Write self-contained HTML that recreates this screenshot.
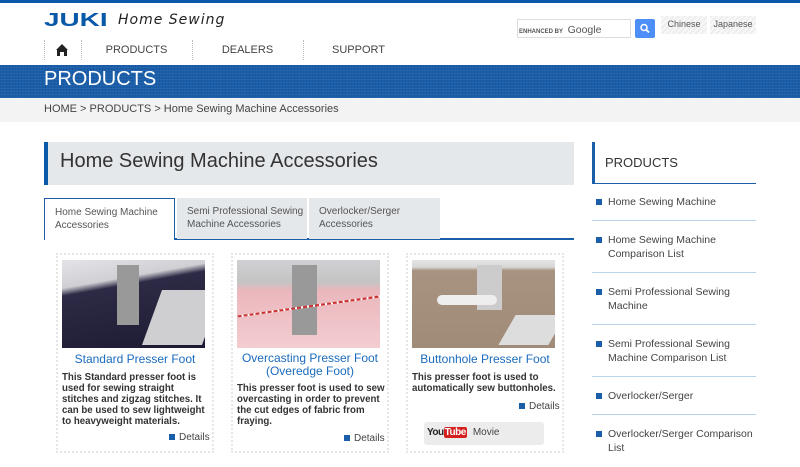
<!DOCTYPE html>
<html><head><meta charset="utf-8"><style>
*{margin:0;padding:0;box-sizing:border-box}
body{width:800px;height:450px;overflow:hidden;background:#fff;font-family:"Liberation Sans",sans-serif;position:relative;color:#333}
.a{position:absolute}
.topbar{left:0;top:0;width:800px;height:3px;background:#0a58a8}
.logo{left:44px;top:10px;font:900 18px/18px "Liberation Sans";color:#0a58a8;transform:scale(1.55,1.05);transform-origin:left top;}
.hs{left:118px;top:12px;font:italic 14px "DejaVu Sans",sans-serif;color:#222;letter-spacing:1px}
.nav{top:40px;height:20px;font-size:11px;color:#444;text-align:center;line-height:20px}
.sep{top:40px;width:1px;height:20px;border-left:1px dotted #bbb}
.banner{left:0;top:65px;width:800px;height:33px;background:#1a5eaa;background-image:repeating-linear-gradient(0deg,rgba(255,255,255,.05) 0 1px,transparent 1px 3px),repeating-linear-gradient(90deg,rgba(0,0,0,.06) 0 1px,transparent 1px 3px)}
.banner span{position:absolute;left:44px;top:3px;color:#fff;font-size:20px}
.crumb{left:0;top:98px;width:800px;height:24px;background:#f3f3f3;font-size:11px;color:#444;padding:5px 44px}
.title{left:44px;top:142px;width:530px;height:43px;background:#e4e8eb;border-left:4px solid #0a58a8;font-size:20px;color:#333;padding:8px 12px}
.tab{top:198px;height:41px;background:#e4e8eb;font-size:10px;line-height:13px;color:#555;padding:7px 10px;white-space:nowrap}
.card{top:253px;width:158px;height:200px;border:2px dotted #e6e6e6}
.img{top:260px;width:143px;height:88px;overflow:hidden}
.ct{font-size:12px;color:#1a6bbd;text-align:center;width:158px}
.cd{font-size:9.7px;font-weight:bold;color:#333;line-height:11px;white-space:nowrap}
.det{font-size:10px;color:#444}
.det:before{content:"";display:inline-block;width:6px;height:6px;background:#1a5eaa;margin-right:4px}
.side{left:592px;width:164px;font-size:10.5px;color:#444;line-height:14px;padding-left:16px;border-bottom:1px solid #b8d3ea}
.side:before{content:"";position:absolute;left:4px;top:4px;width:6px;height:6px;background:#1a5eaa}
</style></head><body>
<div class="a topbar"></div>
<div class="a logo">JUKI</div>
<div class="a hs">Home Sewing</div>
<div class="a sep" style="left:44px"></div>
<svg class="a" style="left:55px;top:43px" width="14" height="14" viewBox="0 0 14 14"><path d="M7 1 L13 7 L12 7 L12 13 L9 13 L9 9 L5 9 L5 13 L2 13 L2 7 L1 7Z" fill="#222"/></svg>
<div class="a sep" style="left:81px"></div>
<div class="a nav" style="left:81px;width:111px">PRODUCTS</div>
<div class="a sep" style="left:192px"></div>
<div class="a nav" style="left:192px;width:111px">DEALERS</div>
<div class="a sep" style="left:303px"></div>
<div class="a nav" style="left:303px;width:111px">SUPPORT</div>
<div class="a" style="left:517px;top:19px;width:114px;height:19px;border:1px solid #ddd;font-size:6px;font-weight:bold;color:#555;padding:4px 1px">ENHANCED BY <span style="font-size:10.5px;font-weight:normal;color:#555;margin-left:3px">Google</span></div>
<div class="a" style="left:635px;top:19px;width:20px;height:19px;background:#4d8ef7;border-radius:2px"><svg width="20" height="19"><circle cx="9" cy="8.5" r="3" stroke="#fff" stroke-width="1.5" fill="none"/><path d="M11 10.5l3 3" stroke="#fff" stroke-width="1.8"/></svg></div>
<div class="a" style="left:661px;top:16px;width:46px;height:18px;background:repeating-linear-gradient(135deg,#eee 0 2px,#f8f8f8 2px 4px);font-size:9px;color:#555;text-align:center;line-height:16px">Chinese</div>
<div class="a" style="left:710px;top:16px;width:46px;height:18px;background:repeating-linear-gradient(135deg,#eee 0 2px,#f8f8f8 2px 4px);font-size:9px;color:#555;text-align:center;line-height:16px">Japanese</div>
<div class="a banner"><span>PRODUCTS</span></div>
<div class="a crumb">HOME &gt; PRODUCTS &gt; Home Sewing Machine Accessories</div>
<div class="a title">Home Sewing Machine Accessories</div>
<div class="a" style="left:44px;top:238px;width:530px;height:2px;background:#1a5eaa"></div>
<div class="a tab" style="left:44px;width:131px;background:#fff;border:1px solid #1a5eaa;border-bottom:none;height:42px">Home Sewing Machine<br>Accessories</div>
<div class="a tab" style="left:177px;width:130px">Semi Professional Sewing<br>Machine Accessories</div>
<div class="a tab" style="left:309px;width:131px">Overlocker/Serger<br>Accessories</div>

<div class="a card" style="left:56px"></div>
<div class="a img" style="left:62px;background:linear-gradient(170deg,#e4e4e8 0,#d0d0d4 25%,#2d2a45 32%,#1d1a33 100%)"><div class="a" style="left:90px;top:30px;width:60px;height:55px;background:#cfcfd2;transform:skewX(-20deg)"></div><div class="a" style="left:55px;top:5px;width:22px;height:60px;background:#999"></div></div>
<div class="a ct" style="left:56px;top:352px">Standard Presser Foot</div>
<div class="a cd" style="left:62px;top:372px">This Standard presser foot is<br>used for sewing straight<br>stitches and zigzag stitches. It<br>can be used to sew lightweight<br>to heavyweight materials.</div>
<div class="a det" style="left:169px;top:432px">Details</div>

<div class="a card" style="left:231px"></div>
<div class="a img" style="left:237px;background:linear-gradient(180deg,#d0d0d4 0,#c4c4c4 25%,#eab7bd 35%,#f3cdd0 100%)"><div class="a" style="left:55px;top:5px;width:25px;height:70px;background:#999"></div><div class="a" style="left:0;top:45px;width:150px;height:2px;background:repeating-linear-gradient(90deg,#c33 0 4px,#fff 4px 6px);transform:rotate(-8deg)"></div></div>
<div class="a ct" style="left:231px;top:352px;line-height:13px">Overcasting Presser Foot (Overedge Foot)</div>
<div class="a cd" style="left:237px;top:383px">This presser foot is used to sew<br>overcasting in order to prevent<br>the cut edges of fabric from<br>fraying.</div>
<div class="a det" style="left:344px;top:433px">Details</div>

<div class="a card" style="left:406px"></div>
<div class="a img" style="left:412px;background:linear-gradient(180deg,#e4e4e4 0,#d8d8d8 8%,#a79380 12%,#9f8b77 100%)"><div class="a" style="left:65px;top:5px;width:25px;height:45px;background:#ccc"></div><div class="a" style="left:25px;top:35px;width:60px;height:10px;background:#eee;border-radius:5px"></div><div class="a" style="left:95px;top:55px;width:50px;height:30px;background:#ddd;transform:skewX(-30deg)"></div></div>
<div class="a ct" style="left:406px;top:352px">Buttonhole Presser Foot</div>
<div class="a cd" style="left:412px;top:372px">This presser foot is used to<br>automatically sew buttonholes.</div>
<div class="a det" style="left:519px;top:401px">Details</div>
<div class="a" style="left:424px;top:422px;width:120px;height:23px;background:#ececec;border-radius:3px;font-size:10px;color:#444;padding:5px 3px"><b style="font-size:10px;color:#222;letter-spacing:-.5px">You</b><b style="background:#d52020;color:#fff;font-size:10px;padding:0 1px;border-radius:2px;letter-spacing:-.5px">Tube</b><span style="margin-left:6px">Movie</span></div>

<div class="a" style="left:592px;top:142px;width:164px;height:42px;border-left:3px solid #1a5eaa;border-bottom:1px solid #1a5eaa;font-size:13px;color:#333;padding:13px 10px">PRODUCTS</div>
<div class="a side" style="top:195px;height:26px">Home Sewing Machine</div>
<div class="a side" style="top:233px;height:40px">Home Sewing Machine Comparison List</div>
<div class="a side" style="top:285px;height:40px">Semi Professional Sewing Machine</div>
<div class="a side" style="top:337px;height:40px">Semi Professional Sewing Machine Comparison List</div>
<div class="a side" style="top:389px;height:26px">Overlocker/Serger</div>
<div class="a side" style="top:427px;height:40px;border:none">Overlocker/Serger Comparison List</div>
</body></html>
